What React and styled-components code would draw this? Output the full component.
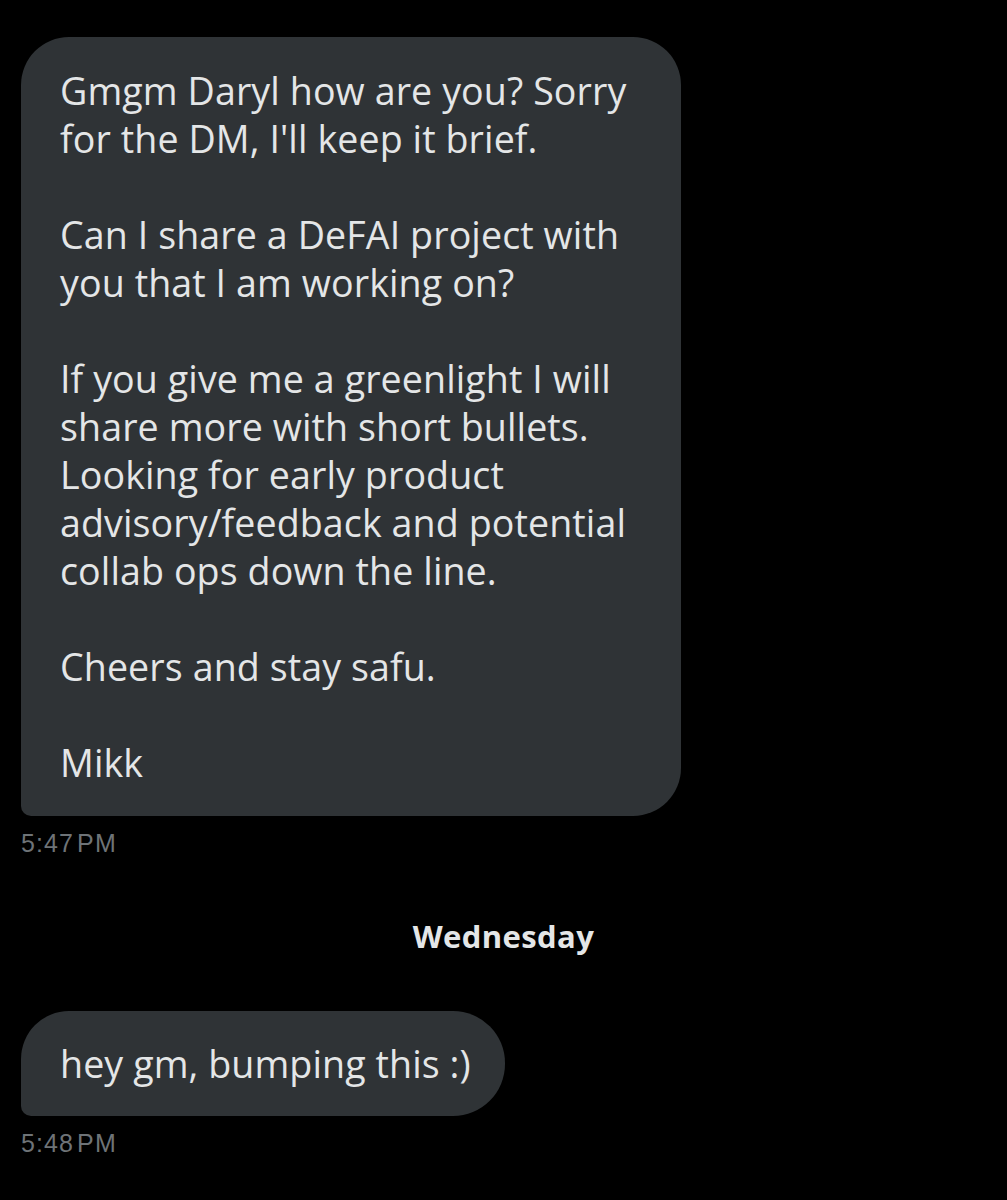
import React from "react";
import styled, { createGlobalStyle } from "styled-components";

const Global = createGlobalStyle`
  html, body { margin: 0; padding: 0; background: #000; }
  body { font-family: "Open Sans", "Noto Sans", sans-serif; }
`;

const Thread = styled.div`
  display: flex;
  flex-direction: column;
  align-items: flex-start;
  padding: 37px 21px 40px 21px;
  min-height: 1200px;
  box-sizing: border-box;
  background: #000;
`;

const Bubble = styled.div`
  background: #2f3336;
  color: #e4e6e7;
  font-family: "Open Sans", "Noto Sans", sans-serif;
  font-size: 37.6px;
  line-height: 48px;
  letter-spacing: 0.1px;
  white-space: pre-line;
  box-sizing: border-box;
  width: ${(p) => p.$width}px;
  padding: ${(p) => p.$pad};
  border-radius: ${(p) => p.$radius};
`;

const Time = styled.div`
  font-family: "Liberation Sans", Arial, sans-serif;
  font-size: 25px;
  line-height: 28px;
  color: #6e7377;
  margin-top: 13px;
  letter-spacing: 1.1px;
  word-spacing: -5px;
`;

const DayDivider = styled.div`
  align-self: center;
  font-family: "Open Sans", sans-serif;
  font-weight: 700;
  font-size: 31px;
  line-height: 36px;
  color: #e4e6e7;
  margin-top: 61px;
  margin-bottom: 57px;
  letter-spacing: 0.4px;
`;

const firstMsg = `Gmgm Daryl how are you? Sorry
for the DM, I'll keep it brief.

Can I share a DeFAI project with
you that I am working on?

If you give me a greenlight I will
share more with short bullets.
Looking for early product
advisory/feedback and potential
collab ops down the line.

Cheers and stay safu.

Mikk`;

export default function App() {
  return (
    <>
      <Global />
      <Thread>
        <Bubble $width={660} $pad="30px 4px 29px 39px" $radius="48px 48px 48px 10px">
          {firstMsg}
        </Bubble>
        <Time>5:47 PM</Time>
        <DayDivider>Wednesday</DayDivider>
        <Bubble $width={484} $pad="29px 4px 28px 39px" $radius="48px 52px 52px 10px">
          hey gm, bumping this :)
        </Bubble>
        <Time>5:48 PM</Time>
      </Thread>
    </>
  );
}
